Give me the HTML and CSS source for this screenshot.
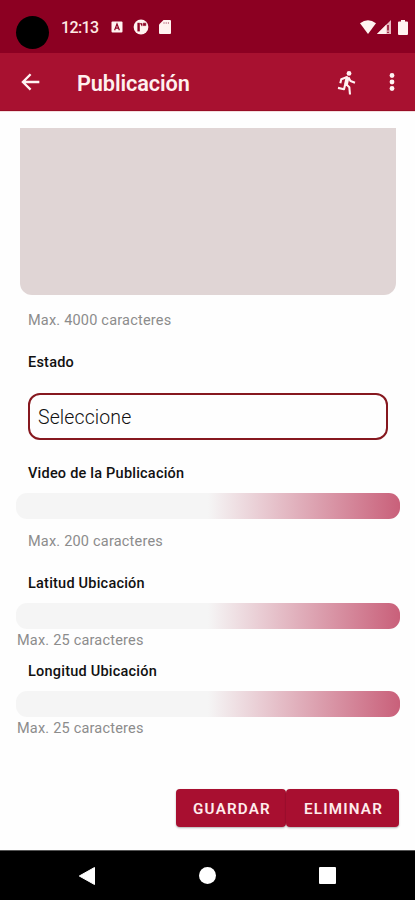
FILE: index.html
```html
<!DOCTYPE html>
<html lang="es">
<head>
  <meta charset="UTF-8" />
  <meta name="viewport" content="width=device-width, initial-scale=1.0"/>
  <title>Publicación</title>
  <link rel="stylesheet" href="styles.css">
</head>
<body>

  <div class="status-bar">
    <div class="camera"></div>
    <span class="clock">12:13</span>
    <div class="notifications">
      <svg width="12" height="12" viewBox="0 0 12 12">
        <rect x="0.5" y="0.5" width="11" height="11" rx="1" fill="#fff3f0"/>
        <path d="M3.6 9.2 6 3l2.4 6.2M4.6 7.2h2.8" fill="none" stroke="#8c0022" stroke-width="1.2"/>
      </svg>
      <svg width="16" height="16" viewBox="0 0 16 16">
        <circle cx="8" cy="8" r="7.4" fill="#fff3f0"/>
        <path d="M5.6 12.4V3.8" fill="none" stroke="#8c0022" stroke-width="2.4"/>
        <path d="M7 4.6h2v2.6M10.2 4.2h2.6v2.4h-2.600z" fill="#8c0022" stroke="#8c0022" stroke-width="0.6"/>
      </svg>
      <svg width="12" height="14" viewBox="0 0 12 14">
        <path d="M4.5 0H11q1 0 1 1v12q0 1-1 1H1q-1 0-1-1V4.5z" fill="#fff3f0"/>
        <path d="M5 2v2M7.2 2v2M9.4 2v2" stroke="#c98a98" stroke-width="1"/>
      </svg>
    </div>
    <div class="system">
      <svg width="16" height="14" viewBox="0 0 16 14">
        <path d="M0 3.2Q8-2.6 16 3.2L8 14z" fill="#fff3f0"/>
      </svg>
      <svg width="14" height="14" viewBox="0 0 14 14">
        <path d="M14 0v14H0z" fill="#e9b9c0"/>
        <path d="M9.4 4.6V14H0z" fill="#fff3f0"/>
        <path d="M11 5v5.5M11 11.7v1.3" stroke="#8c0022" stroke-width="1.5"/>
      </svg>
      <svg class="battery" width="10" height="15" viewBox="0 0 10 15">
        <path d="M3 0h4v1.6h2q1 0 1 1V14q0 1-1 1H1q-1 0-1-1V2.6q0-1 1-1h2z" fill="#fff3f0"/>
      </svg>
    </div>
  </div>

  <header>
    <svg class="back" width="28" height="28" viewBox="0 0 24 24">
      <path d="M20 11H8.330l4.900-4.900L11.800 4.700 4.500 12l7.300 7.300 1.410-1.410L8.330 13H20z" fill="#fff3f3"/>
    </svg>
    <h1>Publicación</h1>
    <svg class="run" width="20" height="26" viewBox="0 0 20 26">
      <circle cx="12" cy="3.400" r="2.400" fill="#fff3f3"/>
      <path d="M10.600 7 9 14.500" fill="none" stroke="#fff3f3" stroke-width="3.800" stroke-linejoin="round"/>
      <path d="M10.800 6.800 4.300 9.200 3.300 13.200M11.500 7.500 13.500 11l4.500 1.700M9 14l3.300 3.200.7 7.300M8.300 14 7 19.200 1 17.900" fill="none" stroke="#fff3f3" stroke-width="2.100" stroke-linejoin="round"/>
    </svg>
    <svg class="more" width="8" height="20" viewBox="0 0 8 20">
      <circle cx="4" cy="3.500" r="2.400" fill="#fff3f3"/>
      <circle cx="4" cy="10" r="2.400" fill="#fff3f3"/>
      <circle cx="4" cy="16.500" r="2.400" fill="#fff3f3"/>
    </svg>
  </header>

  <main>
    <div class="textarea"></div>
    <p class="hint">Max. 4000 caracteres</p>

    <div class="label estado">Estado</div>
    <div class="select">Seleccione</div>

    <div class="label video">Video de la Publicación</div>
    <div class="input"></div>
    <p class="hint hint-video">Max. 200 caracteres</p>

    <div class="label latitud">Latitud Ubicación</div>
    <div class="input"></div>
    <p class="hint hint-left">Max. 25 caracteres</p>

    <div class="label longitud">Longitud Ubicación</div>
    <div class="input"></div>
    <p class="hint hint-left">Max. 25 caracteres</p>

    <div class="buttons">
      <button class="guardar">GUARDAR</button>
      <button class="eliminar">ELIMINAR</button>
    </div>
  </main>

  <footer>
    <svg width="16" height="18" viewBox="0 0 16 18">
      <path d="M15.5.5v17L.3 9z" fill="#fff" stroke="#fff" stroke-linejoin="round"/>
    </svg>
    <div class="home"></div>
    <div class="recent"></div>
  </footer>

</body>
</html>
```

FILE: styles.css
```css
* {
  box-sizing: border-box;
}

body {
  margin: 0;
  height: 900px;
  display: flex;
  flex-direction: column;
  overflow: hidden;
  background: #fefefe;
  font-family: Roboto, sans-serif;
  color: #111;
}

.status-bar {
  height: 53px;
  padding: 1px 7px 0 16px;
  display: flex;
  align-items: center;
  background: #8c0022;
}

.camera {
  width: 33px;
  height: 33px;
  margin-top: 11px;
  border-radius: 50%;
  background: #000;
}

.clock {
  width: 37px;
  margin-left: 12px;
  font-size: 16px;
  font-weight: 500;
  letter-spacing: -0.6px;
  color: #ffe9e4;
}

.notifications {
  display: flex;
  align-items: center;
  gap: 10px;
  margin-left: 13px;
}

.system {
  display: flex;
  align-items: center;
  margin-left: auto;
  gap: 1px;
}

.battery {
  margin-left: 6px;
}

header {
  height: 58px;
  padding: 0 19px 0 16px;
  display: flex;
  align-items: center;
  background: #a81130;
  border-bottom: 1px solid #980c26;
}

h1 {
  margin: 3px 0 0 33px;
  font-size: 21.7px;
  font-weight: 600;
  letter-spacing: -0.1px;
  color: #fff0ee;
}

.run {
  margin: 2px 0 0 auto;
}

.more {
  margin: 1px 0 0 31px;
}

main {
  height: 739px;
  padding: 17px 16px 0;
  border-top: 1px solid #f3dede;
}

.textarea {
  height: 167px;
  margin: -1px 3px 0 4px;
  border-radius: 0 0 12px 12px;
  background: #e0d5d5;
}

.hint {
  margin: 16px 12px 0;
  font-size: 14.5px;
  line-height: 20px;
  letter-spacing: 0.2px;
  color: #8c8c8c;
}

.label {
  margin: 0 12px;
  font-size: 14.5px;
  font-weight: 500;
  line-height: 20px;
  letter-spacing: 0.22px;
}

.estado {
  margin-top: 22px;
}

.select {
  height: 47px;
  margin: 20px 11px 0 12px;
  padding-left: 8px;
  border: 2px solid #86181f;
  border-radius: 12px;
  font-size: 19.5px;
  font-weight: 300;
  line-height: 45px;
  letter-spacing: 0.1px;
  color: #111;
}

.video {
  margin-top: 24px;
}

.input {
  height: 26px;
  margin: 9px -1px 0 0;
  border-radius: 11px;
  background: linear-gradient(to right, #f5f5f5 50%, #c9607a);
}

.hint-video {
  margin-top: 13px;
}

.latitud {
  margin-top: 22px;
}

.hint-left {
  margin: 2px 0 0 1px;
}

.longitud {
  margin-top: 11px;
}

.buttons {
  display: flex;
  justify-content: flex-end;
  margin-top: 50px;
}

button {
  height: 38px;
  padding: 1px 0 0 2px;
  border: 0;
  border-radius: 4px;
  background: #a80f30;
  box-shadow: 0 1px 2px rgba(0,0,0,0.3);
  font-family: inherit;
  font-size: 15.2px;
  font-weight: 600;
  letter-spacing: 1.2px;
  color: #ffecec;
}

.guardar {
  width: 110px;
}

.eliminar {
  width: 113px;
}

footer {
  height: 50px;
  padding: 0 79px 0 79px;
  display: flex;
  align-items: center;
  justify-content: space-between;
  background: #000;
  border-top: 1px solid #555;
}

.home {
  width: 17px;
  height: 17px;
  border-radius: 50%;
  background: #fff;
}

.recent {
  width: 17px;
  height: 17px;
  border-radius: 1px;
  background: #fff;
}
```
